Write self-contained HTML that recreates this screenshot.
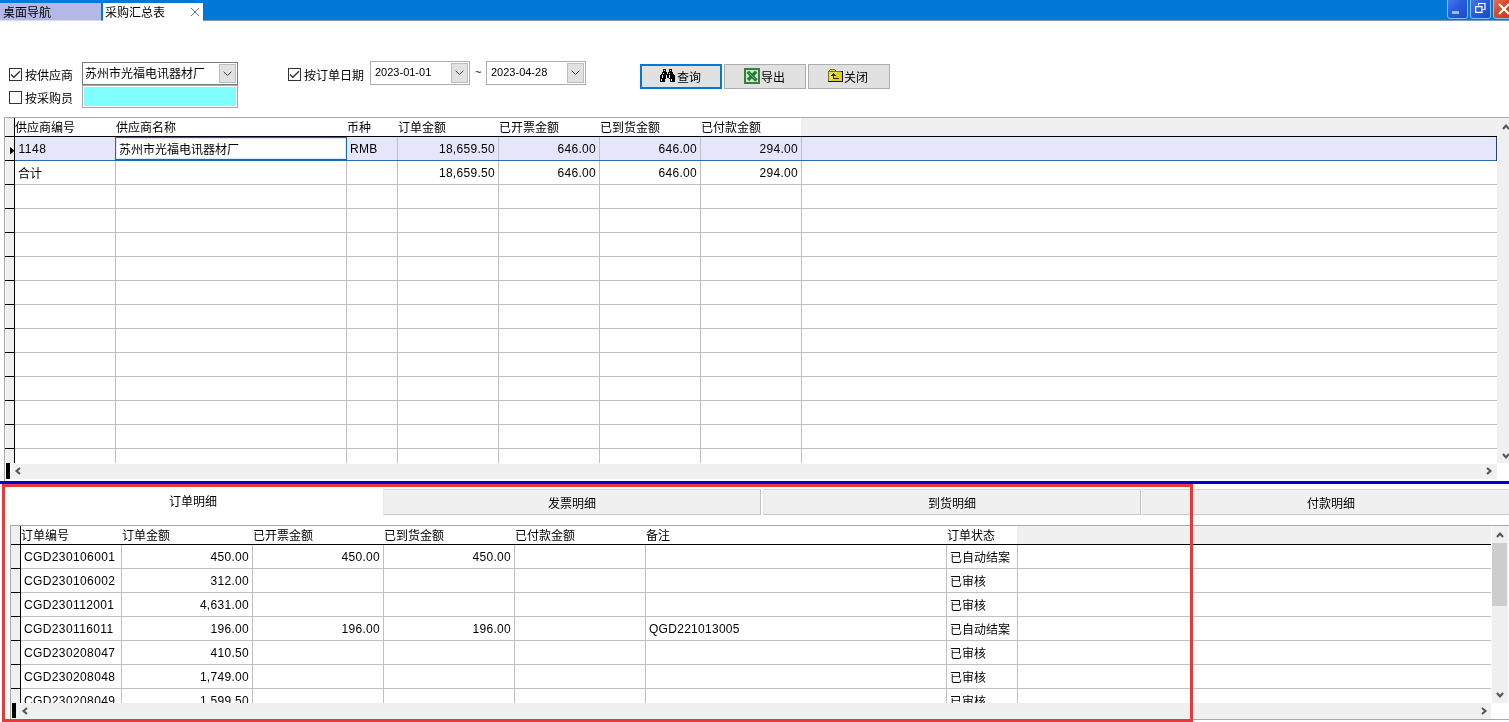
<!DOCTYPE html>
<html lang="zh-CN"><head><meta charset="utf-8"><title>采购汇总表</title>
<style>
html,body{margin:0;padding:0;}
body{width:1509px;height:722px;overflow:hidden;background:#fff;position:relative;font-family:"Liberation Sans",sans-serif;font-size:12px;color:#000;}
div,span{position:absolute;box-sizing:border-box;white-space:nowrap;}
.t{line-height:14px;height:14px;}
.hl{height:1px;background:#c0c0c0;}
.vl{width:1px;background:#c0c0c0;}
.num{text-align:right;letter-spacing:0.3px;}
.la{letter-spacing:0.3px;}
.btn{background:#e1e1e1;border:1px solid #adadad;}
.cb{width:13px;height:13px;border:1px solid #333;background:#fff;}
.sb{background:#f0f0f0;}
svg{position:absolute;overflow:visible;}
</style></head>
<body>
<div id="app" style="left:0;top:0;width:1509px;height:722px;overflow:hidden;will-change:transform;">
<!-- title strip -->
<div style="left:0px;top:0px;width:1509px;height:20px;background:#0078d7;"></div>
<div style="left:0px;top:20px;width:1509px;height:1px;background:#7f9cb9;"></div>
<div style="left:0px;top:20px;width:101px;height:1px;background:#d9dbf2;"></div>
<div style="left:0px;top:3px;width:101px;height:17px;background:#b4b8e6;"></div>
<span class="t" style="left:3px;top:6px;">桌面导航</span>
<div style="left:103px;top:3px;width:100px;height:18px;background:#fff;"></div>
<span class="t" style="left:105px;top:6px;">采购汇总表</span>
<svg style="left:190px;top:7px" width="10" height="10" viewBox="0 0 10 10"><path d="M1 1 L9 9 M9 1 L1 9" stroke="#66768e" stroke-width="1" fill="none"/></svg>
<div style="left:1447px;top:-3px;width:21px;height:22px;background:linear-gradient(135deg,#4a78f0 0%,#2a5ce0 45%,#1c48c8 100%);border:1px solid #7cc0ff;border-radius:3px;"></div>
<div style="left:1470px;top:-3px;width:21px;height:22px;background:linear-gradient(135deg,#4a78f0 0%,#2a5ce0 45%,#1c48c8 100%);border:1px solid #7cc0ff;border-radius:3px;"></div>
<div style="left:1493px;top:-3px;width:21px;height:22px;background:linear-gradient(135deg,#e8775a 0%,#d8482a 45%,#c83a1c 100%);border:1px solid #7cc0ff;border-radius:3px;"></div>
<div style="left:1452px;top:11px;width:7px;height:3px;background:#9abcff;"></div>
<svg style="left:1474px;top:2px" width="13" height="13" viewBox="0 0 13 13"><path d="M4.5 3.5 V1.5 H11 V7.5 H9" stroke="#fff" stroke-width="1.2" fill="none"/><rect x="1.6" y="4.6" width="6.3" height="5.8" stroke="#fff" stroke-width="1.3" fill="none"/></svg>
<svg style="left:1498px;top:3px" width="12" height="12" viewBox="0 0 12 12"><path d="M1 1 L11 11 M11 1 L1 11" stroke="#fff" stroke-width="2.2" fill="none"/></svg>
<!-- filter area -->
<div class="cb" style="left:9px;top:68px;width:13px;height:13px;"><svg style="left:0;top:0" width="11" height="11" viewBox="0 0 11 11"><path d="M1 5.5 L3.8 8.3 L10 2.3" stroke="#2e2e2e" stroke-width="1.3" fill="none"/></svg></div>
<span class="t" style="left:25px;top:69px;">按供应商</span>
<div class="cb" style="left:9px;top:91px;width:13px;height:13px;"></div>
<span class="t" style="left:25px;top:92px;">按采购员</span>
<div style="left:82px;top:62px;width:156px;height:23px;background:#fff;border:1px solid #7a7a7a;"></div>
<div style="left:219px;top:64px;width:17px;height:19px;background:#e1e1e1;border:1px solid #bdbdbd;"></div>
<svg style="left:223px;top:71.3px" width="9" height="6" viewBox="0 0 9 6"><path d="M0.6 0.7 L4.5 4.5 L8.4 0.7" stroke="#3c3c3c" stroke-width="1" fill="none"/></svg>
<span class="t" style="left:85px;top:67px;">苏州市光福电讯器材厂</span>
<div style="left:82px;top:85px;width:156px;height:23px;background:#80ffff;border:1px solid #a6a6b4;box-shadow:inset 0 0 0 1px #fff;"></div>
<div class="cb" style="left:288px;top:68px;width:13px;height:13px;"><svg style="left:0;top:0" width="11" height="11" viewBox="0 0 11 11"><path d="M1 5.5 L3.8 8.3 L10 2.3" stroke="#2e2e2e" stroke-width="1.3" fill="none"/></svg></div>
<span class="t" style="left:304px;top:69px;">按订单日期</span>
<div style="left:370px;top:61px;width:100px;height:24px;background:#fff;border:1px solid #adadad;"></div>
<div style="left:451px;top:63px;width:17px;height:20px;background:#e1e1e1;border:1px solid #bdbdbd;"></div>
<svg style="left:455px;top:70.3px" width="9" height="6" viewBox="0 0 9 6"><path d="M0.6 0.7 L4.5 4.5 L8.4 0.7" stroke="#3c3c3c" stroke-width="1" fill="none"/></svg>
<span class="t" style="left:373px;top:65px;font-size:11px;left:375px;">2023-01-01</span>
<span class="t" style="left:475px;top:65px;font-size:11px;">~</span>
<div style="left:486px;top:61px;width:100px;height:24px;background:#fff;border:1px solid #adadad;"></div>
<div style="left:567px;top:63px;width:17px;height:20px;background:#e1e1e1;border:1px solid #bdbdbd;"></div>
<svg style="left:571px;top:70.3px" width="9" height="6" viewBox="0 0 9 6"><path d="M0.6 0.7 L4.5 4.5 L8.4 0.7" stroke="#3c3c3c" stroke-width="1" fill="none"/></svg>
<span class="t" style="left:489px;top:65px;font-size:11px;left:491px;">2023-04-28</span>
<!-- buttons -->
<div class="btn" style="left:640px;top:64px;width:82px;height:25px;border:2px solid #0078d7;"></div>
<div class="btn" style="left:724px;top:64px;width:82px;height:25px;"></div>
<div class="btn" style="left:808px;top:64px;width:82px;height:25px;"></div>
<svg style="left:660px;top:69px" width="15" height="13" viewBox="0 0 15 13" shape-rendering="crispEdges"><path d="M3 0h3v1h-3zM9 0h3v1h-3zM3 1h1v1h-1zM5 1h1v1h-1zM9 1h1v1h-1zM11 1h1v1h-1zM3 2h3v1h-3zM9 2h3v1h-3zM2 3h5v1h-5zM8 3h5v1h-5zM2 4h1v1h-1zM4 4h3v1h-3zM8 4h1v1h-1zM10 4h3v1h-3zM1 5h13v1h-13zM0 6h2v1h-2zM3 6h3v1h-3zM7 6h2v1h-2zM10 6h5v1h-5zM0 7h2v1h-2zM3 7h3v1h-3zM7 7h2v1h-2zM10 7h5v1h-5zM0 8h2v1h-2zM3 8h3v1h-3zM7 8h2v1h-2zM10 8h5v1h-5zM0 9h6v1h-6zM9 9h6v1h-6zM0 10h1v1h-1zM2 10h3v1h-3zM10 10h1v1h-1zM12 10h3v1h-3zM0 11h1v1h-1zM2 11h3v1h-3zM10 11h1v1h-1zM12 11h3v1h-3zM0 12h5v1h-5zM10 12h5v1h-5z" fill="#000"/><path d="M4 1h1v1h-1zM10 1h1v1h-1zM3 4h1v1h-1zM9 4h1v1h-1zM2 6h1v1h-1zM6 6h1v1h-1zM9 6h1v1h-1zM2 7h1v1h-1zM6 7h1v1h-1zM9 7h1v1h-1zM2 8h1v1h-1zM6 8h1v1h-1zM9 8h1v1h-1zM1 10h1v1h-1zM11 10h1v1h-1zM1 11h1v1h-1zM11 11h1v1h-1z" fill="#f4f4f4"/></svg>
<span class="t" style="left:677px;top:71px;">查询</span>
<svg style="left:744px;top:68px" width="16" height="16" viewBox="0 0 16 16"><rect x="0" y="0" width="16" height="16" fill="#3a7d46"/><rect x="2" y="2" width="12" height="12" fill="#c2f2c2"/><path d="M12.2 3.6 L4 12" stroke="#2f7a3b" stroke-width="3.4" fill="none"/><path d="M3.8 3.8 L12.4 12.4" stroke="#2f7a3b" stroke-width="3.6" fill="none"/><path d="M5 5 L10.8 10.8" stroke="#7fd086" stroke-width="0.7" fill="none"/></svg>
<span class="t" style="left:761px;top:71px;">导出</span>
<svg style="left:828px;top:69px" width="15" height="13" viewBox="0 0 15 13" shape-rendering="crispEdges"><path d="M2 0h5v1h-5zM1 1h1v1h-1zM0 2h13v1h-13zM0 3h1v1h-1zM0 4h1v1h-1zM0 5h1v1h-1zM0 6h1v1h-1zM0 7h1v1h-1zM0 8h1v1h-1zM0 9h1v1h-1zM0 10h1v1h-1zM0 11h1v1h-1z" fill="#7a7320"/><path d="M2 1h5v1h-5zM9 3h5v1h-5zM9 4h5v1h-5zM8 5h6v1h-6zM8 6h6v1h-6zM7 7h7v1h-7zM7 8h7v1h-7zM11 9h3v1h-3zM5 10h9v1h-9zM3 11h11v1h-11z" fill="#dccf2c"/><path d="M7 1h1v1h-1zM13 2h2v1h-2zM14 3h1v1h-1zM14 4h1v1h-1zM14 5h1v1h-1zM14 6h1v1h-1zM14 7h1v1h-1zM14 8h1v1h-1zM14 9h1v1h-1zM14 10h1v1h-1zM14 11h1v1h-1zM0 12h15v1h-15z" fill="#1a1200"/><path d="M1 3h8v1h-8zM1 4h4v1h-4zM6 4h3v1h-3zM1 5h3v1h-3zM7 5h1v1h-1zM1 6h2v1h-2zM1 7h4v1h-4zM6 7h1v1h-1zM1 8h4v1h-4zM6 8h1v1h-1zM1 9h4v1h-4zM1 10h4v1h-4zM1 11h2v1h-2z" fill="#e6de58"/><path d="M5 4h1v1h-1zM4 5h3v1h-3zM3 6h5v1h-5zM5 7h1v1h-1zM5 8h1v1h-1zM5 9h6v1h-6z" fill="#3a3004"/></svg>
<span class="t" style="left:844px;top:71px;">关闭</span>
<!-- top grid -->
<div style="left:4px;top:117px;width:1505px;height:1px;background:#a8a8a8;"></div>
<div style="left:4px;top:117px;width:1px;height:364px;background:#a8a8a8;"></div>
<div style="left:801px;top:118px;width:696px;height:18px;background:#f0f0f0;"></div>
<div style="left:5px;top:118px;width:9px;height:345px;background:#f0f0f0;"></div>
<div style="left:5px;top:118px;width:1px;height:345px;background:#fbfbfb;"></div>
<div style="left:15px;top:137px;width:1482px;height:23px;background:#e6e6fa;"></div>
<div class="hl" style="left:15px;top:184px;width:1482px;height:1px;"></div>
<div class="hl" style="left:15px;top:208px;width:1482px;height:1px;"></div>
<div class="hl" style="left:15px;top:232px;width:1482px;height:1px;"></div>
<div class="hl" style="left:15px;top:256px;width:1482px;height:1px;"></div>
<div class="hl" style="left:15px;top:280px;width:1482px;height:1px;"></div>
<div class="hl" style="left:15px;top:304px;width:1482px;height:1px;"></div>
<div class="hl" style="left:15px;top:328px;width:1482px;height:1px;"></div>
<div class="hl" style="left:15px;top:352px;width:1482px;height:1px;"></div>
<div class="hl" style="left:15px;top:376px;width:1482px;height:1px;"></div>
<div class="hl" style="left:15px;top:400px;width:1482px;height:1px;"></div>
<div class="hl" style="left:15px;top:424px;width:1482px;height:1px;"></div>
<div class="hl" style="left:15px;top:448px;width:1482px;height:1px;"></div>
<div class="vl" style="left:115px;top:137px;width:1px;height:326px;"></div>
<div class="vl" style="left:346px;top:137px;width:1px;height:326px;"></div>
<div class="vl" style="left:397px;top:137px;width:1px;height:326px;"></div>
<div class="vl" style="left:498px;top:137px;width:1px;height:326px;"></div>
<div class="vl" style="left:599px;top:137px;width:1px;height:326px;"></div>
<div class="vl" style="left:700px;top:137px;width:1px;height:326px;"></div>
<div class="vl" style="left:801px;top:137px;width:1px;height:326px;"></div>
<div style="left:5px;top:136px;width:1492px;height:1px;background:#000;"></div>
<div style="left:15px;top:160px;width:1482px;height:1px;background:#2b6cb0;"></div>
<div style="left:1496px;top:137px;width:1px;height:24px;background:#24466e;"></div>
<div style="left:14px;top:118px;width:1px;height:345px;background:#000;"></div>
<div style="left:5px;top:160px;width:10px;height:1px;background:#000;"></div>
<div style="left:5px;top:184px;width:10px;height:1px;background:#000;"></div>
<div style="left:5px;top:208px;width:10px;height:1px;background:#000;"></div>
<div style="left:5px;top:232px;width:10px;height:1px;background:#000;"></div>
<div style="left:5px;top:256px;width:10px;height:1px;background:#000;"></div>
<div style="left:5px;top:280px;width:10px;height:1px;background:#000;"></div>
<div style="left:5px;top:304px;width:10px;height:1px;background:#000;"></div>
<div style="left:5px;top:328px;width:10px;height:1px;background:#000;"></div>
<div style="left:5px;top:352px;width:10px;height:1px;background:#000;"></div>
<div style="left:5px;top:376px;width:10px;height:1px;background:#000;"></div>
<div style="left:5px;top:400px;width:10px;height:1px;background:#000;"></div>
<div style="left:5px;top:424px;width:10px;height:1px;background:#000;"></div>
<div style="left:5px;top:448px;width:10px;height:1px;background:#000;"></div>
<div style="left:115px;top:137px;width:232px;height:24px;background:#fff;border:1px solid #1a66b8;border-bottom-width:2px;box-shadow:inset 0 0 0 1px #dfe8f8;"></div>
<svg style="left:9.5px;top:146.8px" width="5" height="8" viewBox="0 0 5 8"><path d="M0 0 L4.6 3.75 L0 7.5z" fill="#000"/></svg>
<span class="t" style="left:15px;top:121px;">供应商编号</span>
<span class="t" style="left:116px;top:121px;">供应商名称</span>
<span class="t" style="left:347px;top:121px;">币种</span>
<span class="t" style="left:398px;top:121px;">订单金额</span>
<span class="t" style="left:499px;top:121px;">已开票金额</span>
<span class="t" style="left:600px;top:121px;">已到货金额</span>
<span class="t" style="left:701px;top:121px;">已付款金额</span>
<span class="t" style="left:18.5px;top:142px;letter-spacing:0.55px;">1148</span>
<span class="t" style="left:119px;top:143px;">苏州市光福电讯器材厂</span>
<span class="t" style="left:350px;top:142px;letter-spacing:0.3px;">RMB</span>
<span class="t num" style="right:1014px;top:142px;">18,659.50</span>
<span class="t num" style="right:1014px;top:166px;">18,659.50</span>
<span class="t num" style="right:913px;top:142px;">646.00</span>
<span class="t num" style="right:913px;top:166px;">646.00</span>
<span class="t num" style="right:812px;top:142px;">646.00</span>
<span class="t num" style="right:812px;top:166px;">646.00</span>
<span class="t num" style="right:711px;top:142px;">294.00</span>
<span class="t num" style="right:711px;top:166px;">294.00</span>
<span class="t" style="left:18px;top:167px;">合计</span>
<div class="sb" style="left:1497px;top:118px;width:17px;height:346px;"></div>
<div class="sb" style="left:11px;top:464px;width:1486px;height:15px;"></div>
<div style="left:1497px;top:463px;width:12px;height:17px;background:#fff;"></div>
<div style="left:6px;top:463px;width:4px;height:16px;background:#000;"></div>
<svg style="left:1505.5px;top:127px" width="1" height="1"><path d="M-3 2 L0 -1.5 L3 2" stroke="#565656" stroke-width="2.1" fill="none"/></svg>
<svg style="left:1505.5px;top:455.5px" width="1" height="1"><path d="M-3 -2 L0 1.5 L3 -2" stroke="#565656" stroke-width="2.1" fill="none"/></svg>
<svg style="left:18px;top:471.2px" width="1" height="1"><path d="M2 -3 L-1.5 0 L2 3" stroke="#565656" stroke-width="2.1" fill="none"/></svg>
<svg style="left:1489px;top:471.4px" width="1" height="1"><path d="M-2 -3 L1.5 0 L-2 3" stroke="#565656" stroke-width="2.1" fill="none"/></svg>
<!-- splitter -->
<div style="left:0px;top:481px;width:1509px;height:3px;background:#0000d0;"></div>
<!-- detail tabs -->
<div style="left:383px;top:489px;width:378px;height:26px;background:#f0f0f0;border:1px solid #d6d6d6;border-bottom-color:#c8c8c8;border-right-color:#c0c0c0;border-left-color:#e8e8e8;"></div>
<span class="t" style="left:547.5px;top:497px;">发票明细</span>
<div style="left:763px;top:489px;width:378px;height:26px;background:#f0f0f0;border:1px solid #d6d6d6;border-bottom-color:#c8c8c8;border-right-color:#c0c0c0;border-left-color:#e8e8e8;"></div>
<span class="t" style="left:927.5px;top:497px;">到货明细</span>
<div style="left:1142px;top:489px;width:378px;height:26px;background:#f0f0f0;border:1px solid #d6d6d6;border-bottom-color:#c8c8c8;border-right-color:#c0c0c0;border-left-color:#e8e8e8;"></div>
<span class="t" style="left:1306.5px;top:497px;">付款明细</span>
<span class="t" style="left:169px;top:495px;">订单明细</span>
<!-- bottom grid -->
<div style="left:10px;top:525px;width:1499px;height:1px;background:#a8a8a8;"></div>
<div style="left:10px;top:525px;width:1px;height:194px;background:#a8a8a8;"></div>
<div style="left:10px;top:719px;width:1499px;height:1px;background:#a8a8a8;"></div>
<div style="left:1017px;top:526px;width:474px;height:18px;background:#f0f0f0;"></div>
<div style="left:11px;top:526px;width:9px;height:177px;background:#f0f0f0;"></div>
<div class="hl" style="left:21px;top:568px;width:1470px;height:1px;"></div>
<div class="hl" style="left:21px;top:592px;width:1470px;height:1px;"></div>
<div class="hl" style="left:21px;top:616px;width:1470px;height:1px;"></div>
<div class="hl" style="left:21px;top:640px;width:1470px;height:1px;"></div>
<div class="hl" style="left:21px;top:664px;width:1470px;height:1px;"></div>
<div class="hl" style="left:21px;top:688px;width:1470px;height:1px;"></div>
<div class="vl" style="left:121px;top:545px;width:1px;height:158px;"></div>
<div class="vl" style="left:252px;top:545px;width:1px;height:158px;"></div>
<div class="vl" style="left:383px;top:545px;width:1px;height:158px;"></div>
<div class="vl" style="left:514px;top:545px;width:1px;height:158px;"></div>
<div class="vl" style="left:645px;top:545px;width:1px;height:158px;"></div>
<div class="vl" style="left:946px;top:545px;width:1px;height:158px;"></div>
<div class="vl" style="left:1017px;top:545px;width:1px;height:158px;"></div>
<div style="left:11px;top:544px;width:1480px;height:1px;background:#000;"></div>
<div style="left:20px;top:526px;width:1px;height:177px;background:#000;"></div>
<div style="left:11px;top:568px;width:10px;height:1px;background:#000;"></div>
<div style="left:11px;top:592px;width:10px;height:1px;background:#000;"></div>
<div style="left:11px;top:616px;width:10px;height:1px;background:#000;"></div>
<div style="left:11px;top:640px;width:10px;height:1px;background:#000;"></div>
<div style="left:11px;top:664px;width:10px;height:1px;background:#000;"></div>
<div style="left:11px;top:688px;width:10px;height:1px;background:#000;"></div>
<span class="t" style="left:21px;top:529px;">订单编号</span>
<span class="t" style="left:122px;top:529px;">订单金额</span>
<span class="t" style="left:253px;top:529px;">已开票金额</span>
<span class="t" style="left:384px;top:529px;">已到货金额</span>
<span class="t" style="left:515px;top:529px;">已付款金额</span>
<span class="t" style="left:646px;top:529px;">备注</span>
<span class="t" style="left:947px;top:529px;">订单状态</span>
<div style="left:0;top:545px;width:1491px;height:158px;overflow:hidden;">
<span class="t" style="left:24px;top:5px;letter-spacing:0.38px;">CGD230106001</span>
<span class="t num" style="right:1242px;top:5px;">450.00</span>
<span class="t num" style="right:1111px;top:5px;">450.00</span>
<span class="t num" style="right:980px;top:5px;">450.00</span>
<span class="t" style="left:950px;top:6px;">已自动结案</span>
<span class="t" style="left:24px;top:29px;letter-spacing:0.38px;">CGD230106002</span>
<span class="t num" style="right:1242px;top:29px;">312.00</span>
<span class="t" style="left:950px;top:30px;">已审核</span>
<span class="t" style="left:24px;top:53px;letter-spacing:0.38px;">CGD230112001</span>
<span class="t num" style="right:1242px;top:53px;">4,631.00</span>
<span class="t" style="left:950px;top:54px;">已审核</span>
<span class="t" style="left:24px;top:77px;letter-spacing:0.38px;">CGD230116011</span>
<span class="t num" style="right:1242px;top:77px;">196.00</span>
<span class="t num" style="right:1111px;top:77px;">196.00</span>
<span class="t num" style="right:980px;top:77px;">196.00</span>
<span class="t" style="left:649px;top:77px;letter-spacing:0.28px;">QGD221013005</span>
<span class="t" style="left:950px;top:78px;">已自动结案</span>
<span class="t" style="left:24px;top:101px;letter-spacing:0.38px;">CGD230208047</span>
<span class="t num" style="right:1242px;top:101px;">410.50</span>
<span class="t" style="left:950px;top:102px;">已审核</span>
<span class="t" style="left:24px;top:125px;letter-spacing:0.38px;">CGD230208048</span>
<span class="t num" style="right:1242px;top:125px;">1,749.00</span>
<span class="t" style="left:950px;top:126px;">已审核</span>
<span class="t" style="left:24px;top:149px;letter-spacing:0.38px;">CGD230208049</span>
<span class="t num" style="right:1242px;top:149px;">1,599.50</span>
<span class="t" style="left:950px;top:150px;">已审核</span>
</div>
<div style="left:1491px;top:526px;width:1px;height:177px;background:#fff;"></div>
<div class="sb" style="left:1492px;top:526px;width:16px;height:177px;"></div>
<div style="left:1492px;top:543px;width:15px;height:63px;background:#cdcdcd;"></div>
<div class="sb" style="left:11px;top:703px;width:1480px;height:16px;"></div>
<div style="left:12px;top:703px;width:4px;height:15px;background:#000;"></div>
<svg style="left:1499.5px;top:534.9px" width="1" height="1"><path d="M-3 2 L0 -1.5 L3 2" stroke="#565656" stroke-width="2.1" fill="none"/></svg>
<svg style="left:1499.5px;top:695.3px" width="1" height="1"><path d="M-3 -2 L0 1.5 L3 -2" stroke="#565656" stroke-width="2.1" fill="none"/></svg>
<svg style="left:24.5px;top:711px" width="1" height="1"><path d="M2 -3 L-1.5 0 L2 3" stroke="#565656" stroke-width="2.1" fill="none"/></svg>
<svg style="left:1483.5px;top:711px" width="1" height="1"><path d="M-2 -3 L1.5 0 L-2 3" stroke="#565656" stroke-width="2.1" fill="none"/></svg>
<div style="left:2px;top:484px;width:1191px;height:238px;border:3px solid #e53a3a;"></div>
</div>
</body></html>
